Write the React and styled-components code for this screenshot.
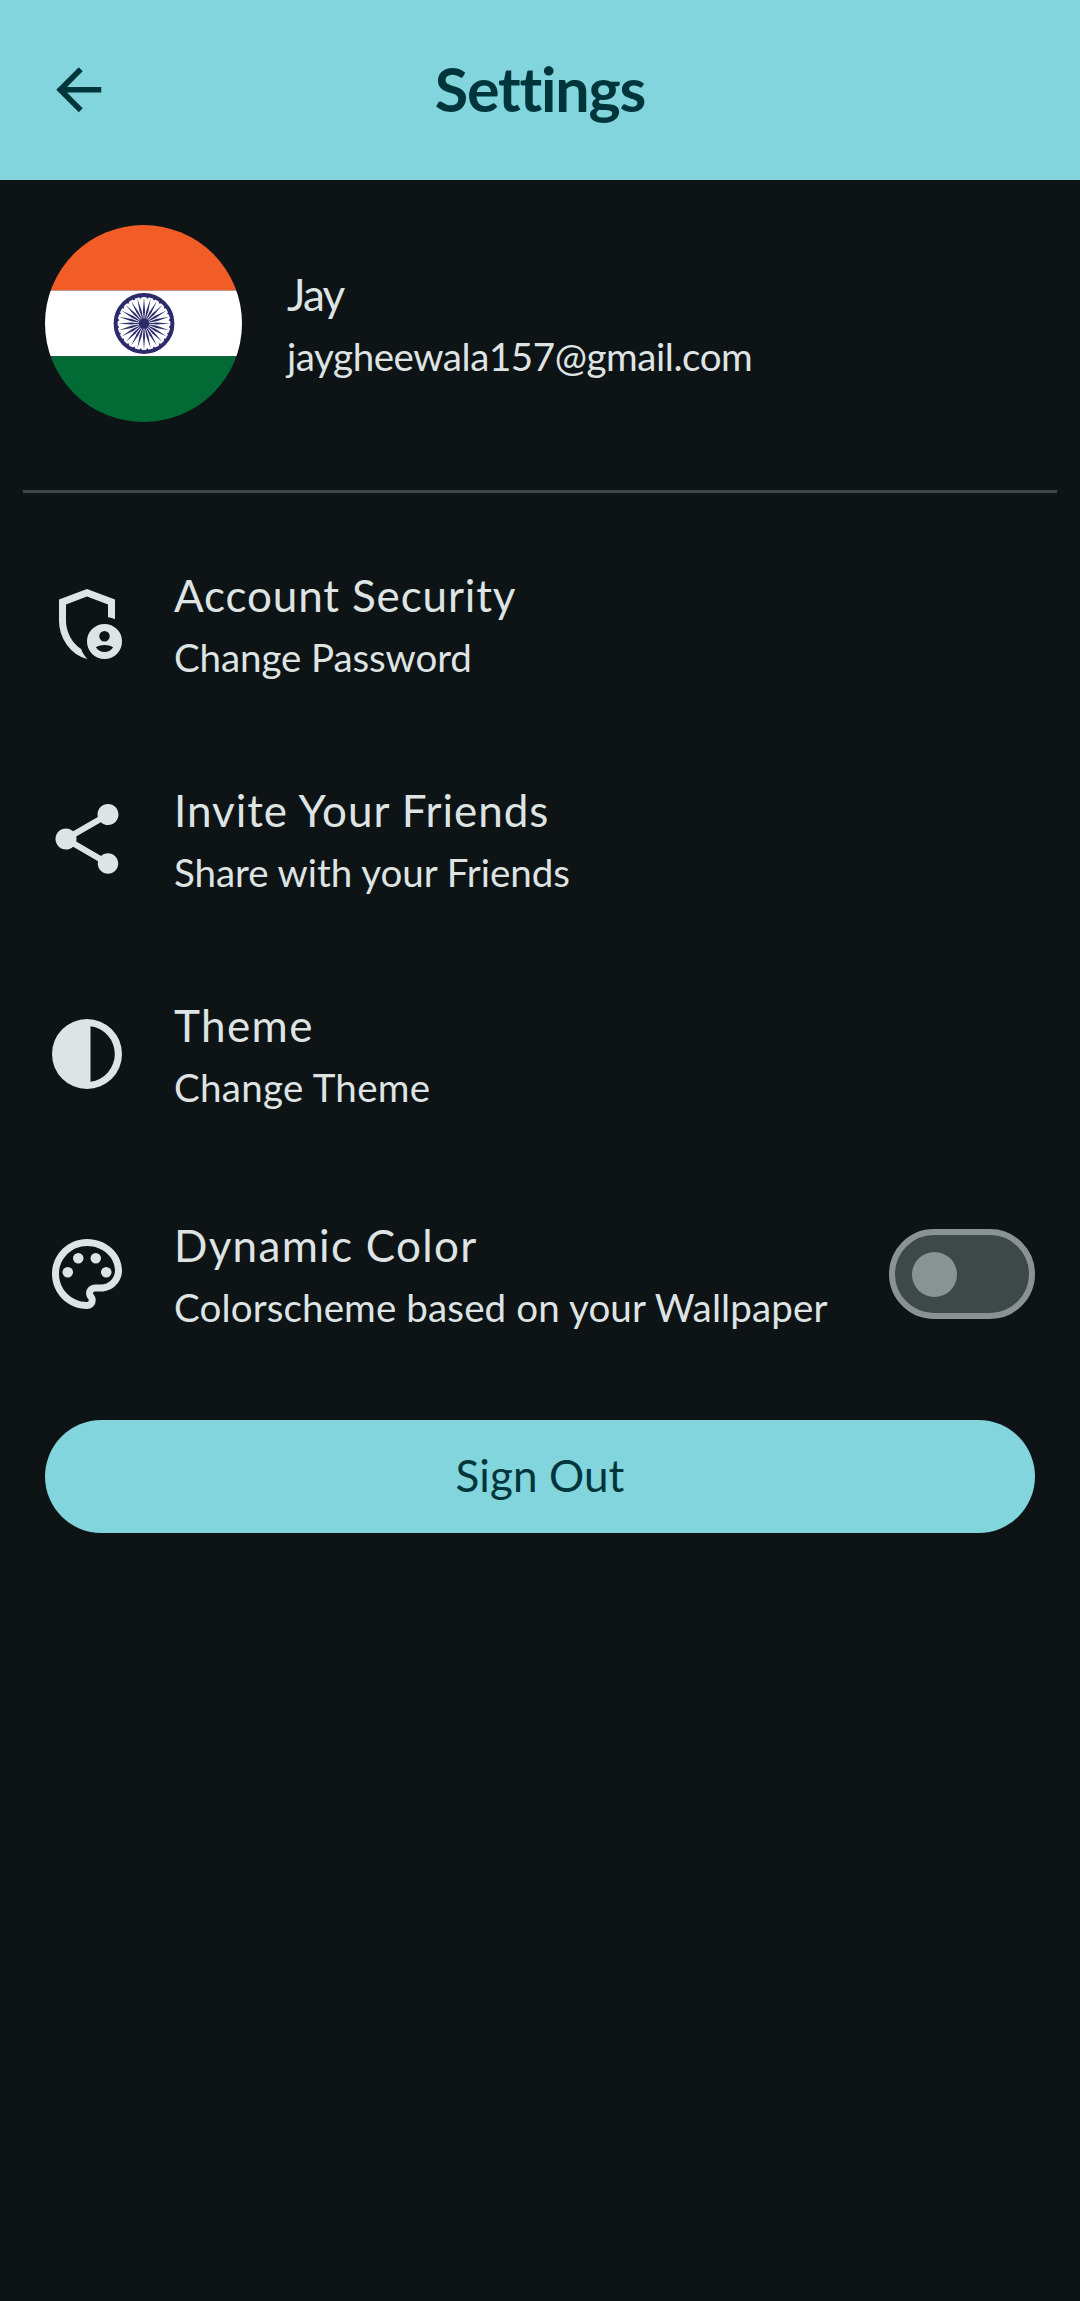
import React, { useState } from 'react';
import styled, { createGlobalStyle } from 'styled-components';

const color = {
  background: '#0e1415',
  text: '#dee3e4',
  primary: '#82d5dc',
  onPrimary: '#00363b',
  outline: '#899393',
  surface: '#3f4849',
};

const GlobalStyle = createGlobalStyle`
  * { box-sizing: border-box; }
  body {
    margin: 0;
    background: ${color.background};
    color: ${color.text};
    font-family: Lato, 'Noto Sans', sans-serif;
    font-variant-ligatures: none;
  }
`;

const Screen = styled.div`
  display: flex;
  flex-direction: column;
  min-height: 2301px;
`;

const Header = styled.header`
  display: grid;
  grid-template-columns: 68px 1fr 68px;
  align-items: center;
  height: 180px;
  padding: 0 45px;
  background: ${color.primary};
  color: ${color.onPrimary};
`;

const BackButton = styled.button`
  display: flex;
  width: 68px;
  height: 68px;
  padding: 0;
  border: 0;
  background: none;
  color: inherit;
`;

const Heading = styled.h1`
  margin: 0;
  padding: 0 0 3px;
  text-align: center;
  font-size: 61px;
  font-weight: 700;
  line-height: 74px;
  letter-spacing: -1.2px;
`;

const Profile = styled.section`
  display: flex;
  align-items: center;
  gap: 45px;
  height: 287px;
  padding: 0 45px;
`;

const Avatar = styled.svg`
  width: 197px;
  height: 197px;
  flex: none;
  border-radius: 50%;
`;

const Divider = styled.hr`
  width: 1034px;
  height: 3px;
  margin: 23px auto 23.5px;
  border: 0;
  background: ${color.surface};
`;

const Row = styled.div`
  display: flex;
  align-items: center;
  height: ${p => p.$height || 215}px;
  padding: 0 45px;
`;

const Icon = styled.svg`
  width: ${p => p.$size}px;
  height: ${p => p.$size}px;
  flex: none;
  fill: currentColor;
`;

const Texts = styled.div`
  flex: 1;
  padding: 0 0 3px ${p => p.$indent || 0}px;
  white-space: nowrap;
`;

const Title = styled.div`
  font-size: 44px;
  line-height: 68px;
  letter-spacing: ${p => p.$track}px;
`;

const Subtitle = styled.div`
  font-size: 38.5px;
  line-height: 56px;
  letter-spacing: ${p => p.$track}px;
`;

const Switch = styled.button`
  display: flex;
  align-items: center;
  justify-content: ${p => (p.$on ? 'flex-end' : 'flex-start')};
  width: 146px;
  height: 90px;
  padding: 0 17px;
  border: 6px solid ${color.outline};
  border-radius: 45px;
  background: ${color.surface};
`;

const Thumb = styled.span`
  width: 45px;
  height: 45px;
  border-radius: 50%;
  background: ${color.outline};
`;

const SignOut = styled.button`
  height: 113px;
  margin: 33px 45px 0;
  padding: 0 0 1px;
  border: 0;
  border-radius: 57px;
  background: ${color.primary};
  color: ${color.onPrimary};
  font: 400 44px/53px Lato, 'Noto Sans', sans-serif;
  letter-spacing: 0.1px;
`;

const spokes = Array.from({ length: 24 }, (_, i) => i * 15);

const FlagAvatar = () => (
  <Avatar viewBox="0 0 197 197">
    <rect width="197" height="65.5" fill="#f25c27" />
    <rect y="65.5" width="197" height="65.8" fill="#fff" />
    <rect y="131.3" width="197" height="66" fill="#026a34" />
    <g transform="translate(99 98.5)" fill="#2c2b6b">
      <circle r="28.4" fill="none" stroke="#2c2b6b" strokeWidth="4" />
      <circle r="5.2" />
      {spokes.map(a => (
        <g key={a} transform={`rotate(${a})`}>
          <path d="M-.35-4 -1.05-13 0-26 1.05-13 .35-4Z" />
          <circle r="1" cy="-26.2" transform="rotate(7.5)" />
        </g>
      ))}
    </g>
  </Avatar>
);

const ShieldPerson = () => (
  <path d="M680-280q25 0 42.5-17.5T740-340t-17.5-42.5T680-400t-42.5 17.5T620-340t17.5 42.5T680-280Zm0 120q31 0 57-14.5t42-38.5q-22-13-47-20t-52-7q-27 0-52 7t-47 20q16 24 42 38.5t57 14.5ZM480-80q-139-35-229.5-159.5T160-516v-244l320-120 320 120v227q-19-8-39-14.5t-41-9.5v-147l-240-90-240 90v188q0 47 12.5 94t35 89.5Q310-290 342-254t71 60q11 32 29 61t41 52q-1 0-1.5.5t-1.500.5Zm200 0q-83 0-141.500-58.500T480-280t58.500-141.500T680-480t141.500 58.500T880-280t-58.500 141.500T680-80Z" />
);

const Share = () => (
  <path d="M18 16.080c-.76 0-1.440.3-1.960.77L8.910 12.700c.05-.23.09-.46.09-.7s-.04-.47-.09-.7l7.050-4.110c.54.5 1.250.81 2.040.81 1.660 0 3-1.340 3-3s-1.340-3-3-3-3 1.340-3 3c0 .24.04.47.09.7L8.040 9.810C7.500 9.310 6.790 9 6 9c-1.660 0-3 1.340-3 3s1.340 3 3 3c.79 0 1.500-.31 2.040-.81l7.120 4.160c-.05.21-.08.43-.08.65 0 1.610 1.310 2.920 2.920 2.920s2.920-1.310 2.920-2.920-1.310-2.920-2.920-2.920z" />
);

const Contrast = () => (
  <path d="M12 2a10 10 0 1 0 0 20 10 10 0 0 0 0-20zm1 2.070A8 8 0 0 1 13 19.930z" />
);

const Palette = () => (
  <>
    <path d="M12 22C6.490 22 2 17.510 2 12S6.490 2 12 2s10 4.040 10 9c0 3.310-2.690 6-6 6h-1.770c-.28 0-.5.22-.5.5 0 .12.05.23.13.33.41.47.64 1.060.64 1.670A2.500 2.500 0 0 1 12 22zm0-18c-4.410 0-8 3.590-8 8s3.590 8 8 8c.28 0 .5-.22.5-.5a.54.54 0 0 0-.14-.35c-.41-.46-.63-1.050-.63-1.650a2.500 2.500 0 0 1 2.500-2.500H16c2.210 0 4-1.790 4-4 0-3.860-3.590-7-8-7z" />
    <circle cx="6.5" cy="11.5" r="1.5" />
    <circle cx="9.5" cy="7.5" r="1.5" />
    <circle cx="14.5" cy="7.5" r="1.5" />
    <circle cx="17.5" cy="11.5" r="1.5" />
  </>
);

const settings = [
  { title: 'Account Security', track: 0.85, sub: 'Change Password', subTrack: -0.1, icon: ShieldPerson, box: '0 -960 960 960' },
  { title: 'Invite Your Friends', track: 0.95, sub: 'Share with your Friends', subTrack: -0.03, icon: Share },
  { title: 'Theme', track: 1.4, sub: 'Change Theme', subTrack: 0.3, icon: Contrast },
  { title: 'Dynamic Color', track: 1.3, sub: 'Colorscheme based on your Wallpaper', subTrack: 0.14, icon: Palette, toggle: true },
];

export default function App() {
  const [dynamic, setDynamic] = useState(false);
  return (
    <Screen>
      <GlobalStyle />
      <Header>
        <BackButton aria-label="Back">
          <Icon $size={67.5} viewBox="0 0 24 24">
            <path d="M20 11H7.830l5.590-5.590L12 4l-8 8 8 8 1.410-1.410L7.830 13H20z" />
          </Icon>
        </BackButton>
        <Heading>Settings</Heading>
      </Header>
      <Profile>
        <FlagAvatar />
        <Texts>
          <Title $track={-1.8}>Jay</Title>
          <Subtitle $track={-0.43}>jaygheewala157@gmail.com</Subtitle>
        </Texts>
      </Profile>
      <Divider />
      {settings.map(({ title, track, sub, subTrack, icon: Glyph, box, toggle }) => (
        <Row key={title} $height={toggle ? 225 : 215}>
          <Icon $size={84} viewBox={box || '0 0 24 24'}>
            <Glyph />
          </Icon>
          <Texts $indent={45}>
            <Title $track={track}>{title}</Title>
            <Subtitle $track={subTrack}>{sub}</Subtitle>
          </Texts>
          {toggle && (
            <Switch role="switch" aria-label={title} aria-checked={dynamic} $on={dynamic} onClick={() => setDynamic(!dynamic)}>
              <Thumb />
            </Switch>
          )}
        </Row>
      ))}
      <SignOut>Sign Out</SignOut>
    </Screen>
  );
}
